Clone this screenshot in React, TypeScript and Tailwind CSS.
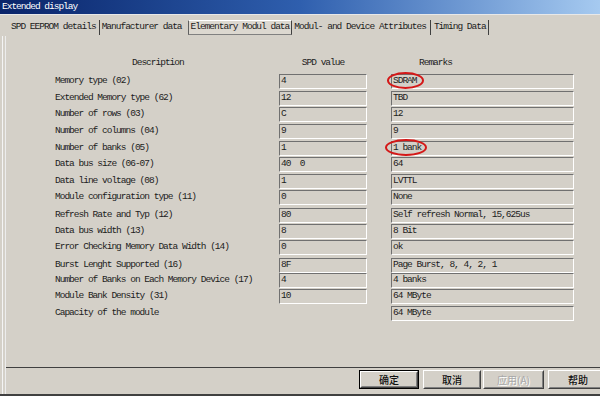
import React from "react";

type Row = { label: string; spd?: string; remark: string; h: string; mark?: "sdram" | "bank" };

const rows: Row[] = [
  { label: "Memory type (02)", spd: "4", remark: "SDRAM", h: "h-[17px]", mark: "sdram" },
  { label: "Extended Memory type (62)", spd: "12", remark: "TBD", h: "h-[16px]" },
  { label: "Number of rows (03)", spd: "C", remark: "12", h: "h-[17px]" },
  { label: "Number of columns (04)", spd: "9", remark: "9", h: "h-[17px]" },
  { label: "Number of banks (05)", spd: "1", remark: "1 bank", h: "h-[16px]", mark: "bank" },
  { label: "Data bus size (06-07)", spd: "40  0", remark: "64", h: "h-[17px]" },
  { label: "Data line voltage (08)", spd: "1", remark: "LVTTL", h: "h-[16px]" },
  { label: "Module configuration type (11)", spd: "0", remark: "None", h: "h-[18px]" },
  { label: "Refresh Rate and Typ (12)", spd: "80", remark: "Self refresh Normal, 15,625us", h: "h-[16px]" },
  { label: "Data bus width (13)", spd: "8", remark: "8 Bit", h: "h-[16px]" },
  { label: "Error Checking Memory Data Width (14)", spd: "0", remark: "ok", h: "h-[18px]" },
  { label: "Burst Lenght Supported (16)", spd: "8F", remark: "Page Burst, 8, 4, 2, 1", h: "h-[15px]" },
  { label: "Number of Banks on Each Memory Device (17)", spd: "4", remark: "4 banks", h: "h-[16px]" },
  { label: "Module Bank Density (31)", spd: "10", remark: "64 MByte", h: "h-[17px]" },
  { label: "Capacity of the module", remark: "64 MByte", h: "h-[17px]" },
];

const mono = "font-['Liberation_Mono',monospace] text-[9.5px] tracking-[-1px] whitespace-pre";

function Box({ text, w, children }: { text: string; w: string; children?: React.ReactNode }) {
  return (
    <div
      className={`relative ${w} h-[15px] border border-t-[#707070] border-l-[#707070] border-b-white border-r-white bg-[#d4d0c8] flex items-center pl-[1px] text-[#1c1c1c] ${mono}`}
    >
      {text}
      {children}
    </div>
  );
}

function Btn({ label, w, def, disabled }: { label: string; w: string; def?: boolean; disabled?: boolean }) {
  return (
    <div className={`${w} h-[19px] ${def ? "border border-black" : ""} shrink-0`}>
      <div className="w-full h-full border border-t-white border-l-white border-b-[#404040] border-r-[#404040]">
        <div
          className={`w-full h-full border border-t-[#d4d0c8] border-l-[#d4d0c8] border-b-[#808080] border-r-[#808080] flex items-center justify-center font-['Noto_Sans_CJK_SC',sans-serif] text-[10px] leading-none ${
            disabled ? "text-[#a8a8a8] font-normal [text-shadow:1px_1px_0_#ffffff]" : "text-[#111] font-medium"
          }`}
        >
          {label}
        </div>
      </div>
    </div>
  );
}

export default function App() {
  return (
    <div className="w-[600px] h-[396px] bg-[#d4d0c8] flex flex-col overflow-hidden">
      {/* Title bar */}
      <div className="h-[15px] shrink-0 border-b border-[#e8e8e8]">
        <div className="h-full bg-gradient-to-r from-[#0a246a] via-[#2f5fae] to-[#a6caf0] flex items-center pl-[2px] text-white font-['Liberation_Mono',monospace] text-[9.5px] tracking-[-1px]">
          Extended display
        </div>
      </div>

      {/* Tabs */}
      <div className={`h-[21px] shrink-0 pt-[5px] flex items-start text-[#1c1c1c] ${mono}`}>
        <div className="h-[15px] flex items-center pl-[11px]">SPD EEPROM details</div>
        <div className="ml-[3px] h-[15px] w-[1px] bg-[#404040]" />
        <div className="ml-[2px] h-[15px] flex items-center">Manufacturer data</div>
        <div className="ml-[6px] h-[15px] px-[2px] flex items-center border border-t-white border-l-[#606060] border-b-[#808080] border-r-[#404040] bg-[#dcd8d0]">
          Elementary Modul data
        </div>
        <div className="ml-[2px] h-[15px] flex items-center">Modul- and Device Attributes</div>
        <div className="ml-[4px] h-[15px] w-[1px] bg-[#404040]" />
        <div className="ml-[3px] h-[15px] flex items-center">Timing Data</div>
        <div className="ml-[2px] h-[15px] w-[1px] bg-[#404040]" />
      </div>

      {/* Body with left edge lines */}
      <div className="flex-1 flex flex-col ml-[2px] border-l border-[#f4f4f4]">
        <div className="flex-1 flex flex-col ml-[2px] border-l border-[#ececec]">
          {/* Panel */}
          <div className="flex-1 pt-[20px] pl-[49px] text-[#1c1c1c]">
            <div className={`h-[14px] flex items-center ${mono}`}>
              <div className="w-[224px] pl-[77px]">Description</div>
              <div className="w-[88px] text-center">SPD value</div>
              <div className="ml-[24px] pl-[28px]">Remarks</div>
            </div>
            <div className="mt-[4px] flex flex-col">
              {rows.map((r) => (
                <div key={r.label} className={`${r.h} flex items-start`}>
                  <div className={`w-[224px] h-[15px] flex items-center ${mono}`}>{r.label}</div>
                  {r.spd !== undefined ? <Box text={r.spd} w="w-[88px]" /> : <div className="w-[88px]" />}
                  <div className="ml-[24px]">
                    <Box text={r.remark} w="w-[183px]">
                      {r.mark === "sdram" && (
                        <div className="absolute left-[-5px] top-[-3px] w-[37px] h-[17px] rounded-[50%] border-2 border-[#d41818]" />
                      )}
                      {r.mark === "bank" && (
                        <div className="absolute left-[-7px] top-[-3px] w-[42px] h-[17px] rounded-[50%] border-2 border-[#d41818]" />
                      )}
                    </Box>
                  </div>
                </div>
              ))}
            </div>
          </div>

          {/* Button strip */}
          <div className="h-[27px] shrink-0 border-t border-[#404040] pt-[2px] flex items-start">
            <div className="ml-[353px] flex">
              <Btn label="确定" w="w-[60px]" def />
              <div className="ml-[4px]">
                <Btn label="取消" w="w-[58px]" />
              </div>
              <div className="ml-[2px]">
                <Btn label="应用(A)" w="w-[61px]" disabled />
              </div>
              <div className="ml-[4px]">
                <Btn label="帮助" w="w-[60px]" />
              </div>
            </div>
          </div>
        </div>
      </div>
      <div className="h-[2px] shrink-0 bg-[#404040]" />
    </div>
  );
}
